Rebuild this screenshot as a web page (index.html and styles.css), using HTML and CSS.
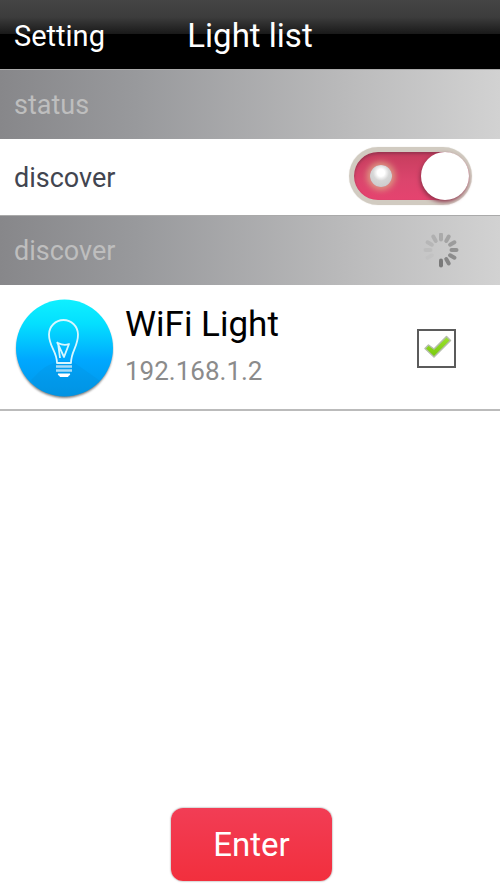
FILE: index.html
```html
<!DOCTYPE html>
<html lang="en">
<head>
<meta charset="utf-8">
<meta name="viewport" content="width=device-width, initial-scale=1">
<title>Light list</title>
<link rel="stylesheet" href="styles.css">
</head>
<body>
<header class="topbar">
  <a class="topbar-link" href="#setting">Setting</a>
  <h1 class="topbar-title">Light list</h1>
</header>
<main class="content">
  <h2 class="section">status</h2>
  <div class="row">
    <label class="row-label" for="discover">discover</label>
    <input class="switch" type="checkbox" role="switch" id="discover" checked>
  </div>
  <h2 class="section">discover
    <svg class="spinner" viewBox="-18 -17 36 36" aria-hidden="true">
      <g stroke-width="4" stroke-linecap="round" stroke="#666">
        <path d="M0 10.500V15.500" opacity=".8"/>
        <path d="M0 10.500V15.500" opacity=".68" transform="rotate(-30)"/>
        <path d="M0 10.500V15.500" opacity=".62" transform="rotate(-60)"/>
        <path d="M0 10.500V15.500" opacity=".56" transform="rotate(-90)"/>
        <path d="M0 10.500V15.500" opacity=".46" transform="rotate(-120)"/>
        <path d="M0 10.500V15.500" opacity=".38" transform="rotate(-150)"/>
        <path d="M0 10.500V15.500" opacity=".31" transform="rotate(180)"/>
        <path d="M0 10.500V15.500" opacity=".24" transform="rotate(150)"/>
        <path d="M0 10.500V15.500" opacity=".17" transform="rotate(120)"/>
        <path d="M0 10.500V15.500" opacity=".09" transform="rotate(90)"/>
        <path d="M0 10.500V15.500" opacity=".04" transform="rotate(60)"/>
      </g>
    </svg>
  </h2>
  <ul class="lights">
    <li class="light">
      <svg class="light-icon" viewBox="0 0 100 104" aria-hidden="true">
        <defs>
          <linearGradient id="sky" x1="0" y1="0" x2="0" y2="1">
            <stop offset="0" stop-color="#0ff0ff"/>
            <stop offset=".25" stop-color="#04dfff"/>
            <stop offset=".62" stop-color="#00a8ff"/>
            <stop offset="1" stop-color="#0096e8"/>
          </linearGradient>
          <clipPath id="disc"><circle cx="50.500" cy="52" r="48.500"/></clipPath>
          <filter id="soft" x="-10%" y="-10%" width="120%" height="125%">
            <feGaussianBlur stdDeviation="1.300"/>
          </filter>
        </defs>
        <circle cx="50.500" cy="54" r="48" fill="#444" opacity=".7" filter="url(#soft)"/>
        <circle cx="50.500" cy="52" r="48.500" fill="url(#sky)"/>
        <path clip-path="url(#disc)" d="M17 84Q32 67 46 65H58L96 92 60 104H30Z" fill="#0879b8" opacity=".13"/>
        <g fill="none" stroke="#d8f7ff" stroke-width="1.800" stroke-linejoin="round">
          <path d="M43 67C43 55 35 51 35 38.500A14.500 14.500 0 0 1 64 38.500C64 51 57 55 57 67Z"/>
          <path d="M46 62 44 47Q50 50 55 48L50 61 43 46"/>
        </g>
        <path d="M42 70.500H58M42 74.500H58" stroke="#a9dcf7" stroke-width="2.500"/>
        <path d="M44 78H56L54 80.500H46Z" fill="#fff" stroke="#fff" stroke-linejoin="round"/>
      </svg>
      <label class="light-text" for="wifi-light">
        <span class="light-name">WiFi Light</span>
        <span class="light-address">192.168.1.2</span>
      </label>
      <span class="tick">
        <input class="tick-box" type="checkbox" id="wifi-light" checked>
        <svg class="tick-mark" viewBox="0 0 39 39" aria-hidden="true">
          <defs>
            <linearGradient id="leaf" x1="0" y1="0" x2="0" y2="1">
              <stop offset="0" stop-color="#9be32d"/>
              <stop offset="1" stop-color="#77c90b"/>
            </linearGradient>
          </defs>
          <path d="M8 19.500 11.500 16 17 20 29.500 7.500 33.500 11.500 17 28Z" fill="url(#leaf)" stroke="#b5bdab" stroke-width="1.500" stroke-linejoin="round"/>
        </svg>
      </span>
    </li>
  </ul>
</main>
<footer class="actions">
  <button class="enter" type="button">Enter</button>
</footer>
</body>
</html>
```
FILE: styles.css
```css
* {
  box-sizing: border-box;
}

body {
  margin: 0;
  min-height: 100vh;
  display: flex;
  flex-direction: column;
  background: #fff;
  color: #000;
  font-family: Roboto, "Liberation Sans", sans-serif;
}

h1,
h2,
ul {
  margin: 0;
  padding: 0;
  font-weight: 400;
  list-style: none;
}

.topbar {
  display: grid;
  grid-template-columns: 1fr auto 1fr;
  align-items: center;
  height: 69px;
  padding: 2px 14px 0;
  background: linear-gradient(#454545, #3c3c3c 25%, #181818 50%, #000 50%);
  color: #fff;
}

.topbar-link {
  color: inherit;
  font-size: 29px;
  text-decoration: none;
}

.topbar-title {
  font-size: 33px;
}

.content {
  flex: 1;
}

.section {
  display: flex;
  align-items: center;
  justify-content: space-between;
  height: 70px;
  padding: 0 41px 0 14px;
  border-top: 1px solid #aaa;
  background: linear-gradient(90deg, #87878a, #98999c 27%, #bababb 69%, #d2d2d2);
  color: #bebebe;
  font-size: 27px;
}

.spinner {
  width: 36px;
  height: 36px;
}

.row {
  display: flex;
  align-items: center;
  justify-content: space-between;
  height: 76px;
  padding: 0 28px 0 14px;
}

.row-label {
  padding-top: 2px;
  color: #424550;
  font-size: 27px;
}

.switch {
  appearance: none;
  display: flex;
  align-items: center;
  justify-content: space-between;
  width: 123px;
  height: 58px;
  margin: 0 0 2px;
  padding: 0 0 0 12px;
  border: solid #d1cbc1;
  border-width: 5px 3px 5px 5px;
  border-radius: 30px;
  background: linear-gradient(#c53d5d, #dc456d 60%, #e5436f);
  box-shadow: inset 0 2px 3px #983450, 0 0 1px #d1cbc1;
}

.switch::before {
  content: "";
  width: 22px;
  height: 22px;
  margin-left: 4px;
  border-radius: 50%;
  background: radial-gradient(circle at 50% 35%, #fff 20%, #d6d6d6 45%, #c6c6c6);
  box-shadow: 0 0 6px 3px #dc9a82;
}

.switch::after {
  content: "";
  width: 48px;
  height: 48px;
  border-radius: 50%;
  background: #fff;
  box-shadow: -1px 2px 4px #8d3048;
}

.light {
  display: flex;
  align-items: center;
  height: 126px;
  padding: 2px 44px 0 14px;
  border-bottom: 2px solid #bbb;
}

.light-icon {
  flex: none;
  width: 100px;
  height: 104px;
}

.light-text {
  flex: 1;
  display: flex;
  flex-direction: column;
  gap: 6px;
  padding: 0 0 5px 11px;
}

.light-name {
  font-size: 35px;
  line-height: 44px;
}

.light-address {
  color: #8b8b8b;
  font-size: 26px;
  line-height: 36px;
}

.tick {
  display: grid;
}

.tick-box,
.tick-mark {
  grid-area: 1 / 1;
  width: 39px;
  height: 39px;
  margin: 0;
}

.tick-box {
  appearance: none;
  border: 2px solid #5b5b5b;
  background: #fff;
}

.tick-mark {
  pointer-events: none;
}

.actions {
  display: flex;
  justify-content: center;
  padding: 0 0 8px 3px;
}

.enter {
  width: 161px;
  height: 73px;
  padding: 0;
  border: 0;
  border-radius: 12px;
  background: linear-gradient(#f23d55, #f22f3d);
  box-shadow: 0 0 2px #777;
  color: #fff;
  font-family: inherit;
  font-size: 33px;
}
```
